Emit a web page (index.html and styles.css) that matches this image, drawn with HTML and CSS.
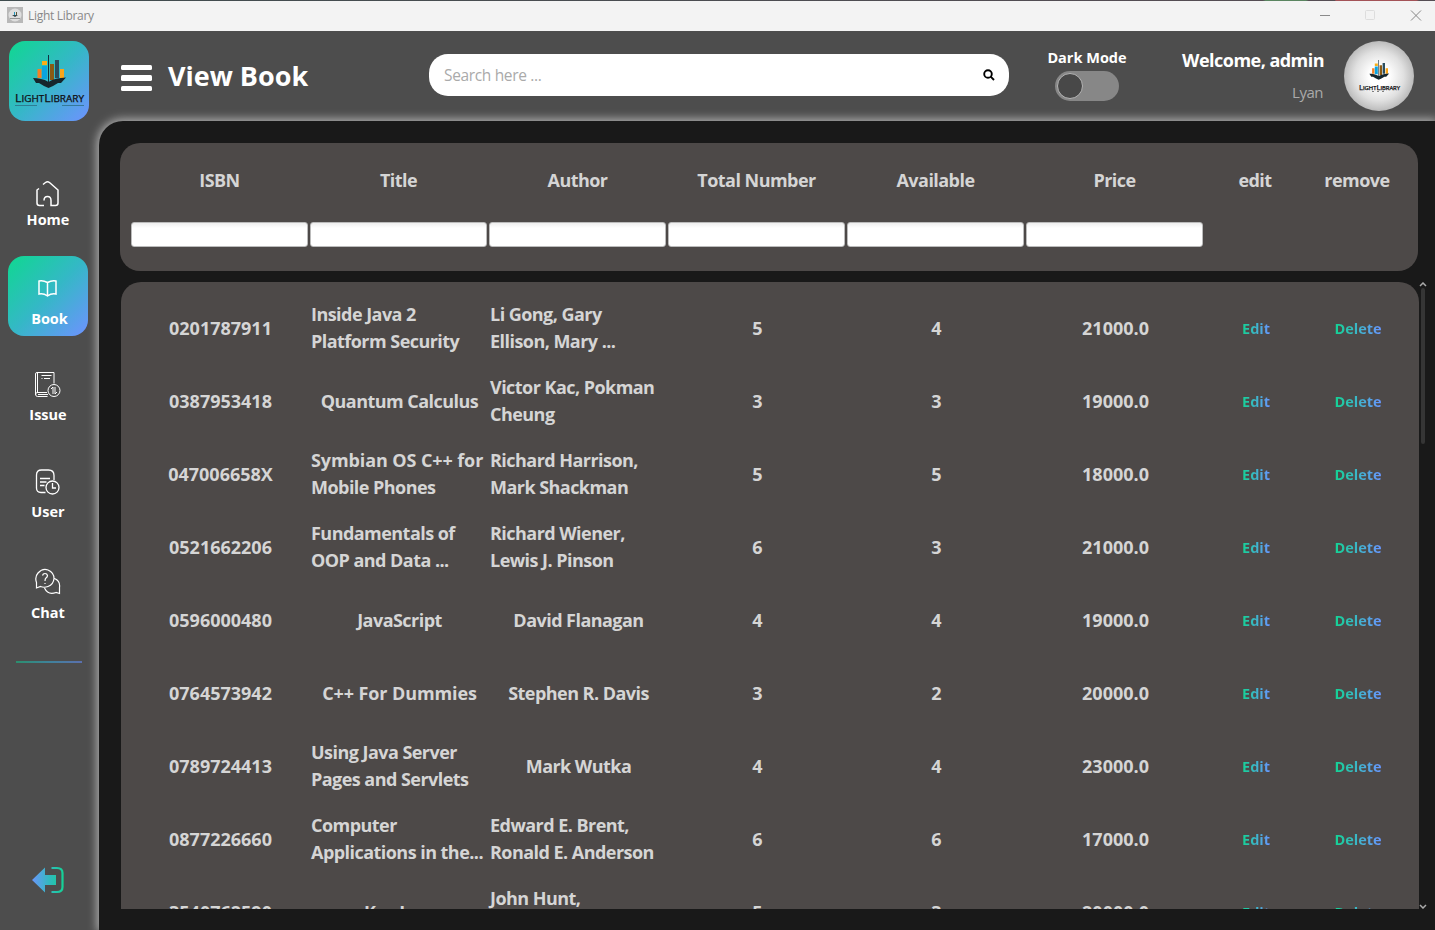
FILE: index.html
```html
<!DOCTYPE html>
<html lang="en">
<head>
<meta charset="utf-8">
<title>Light Library</title>
<link rel="stylesheet" href="styles.css">
</head>
<body>
<svg width="0" height="0" class="defs">
  <defs>
    <linearGradient id="exitg" gradientUnits="userSpaceOnUse" x1="0" x2="32" y1="0" y2="0"><stop offset="0" stop-color="#6a96fb"/><stop offset=".6" stop-color="#2dbdb8"/><stop offset="1" stop-color="#13d394"/></linearGradient>
    <symbol id="mark" viewBox="0 0 80 80">
      <path d="M28.500 28h4v9h-4z" fill="#f58025"/>
      <path d="M33 20h5v4h-5z" fill="#fbae17"/>
      <path d="M33 25h5v13h-5z" fill="#0aa5e0"/>
      <path d="M39 14h1v27h-1z" fill="#12303e"/>
      <path d="M41 23h4v16h-4z" fill="#8a5a14"/>
      <path d="M46 19h4v18h-4z" fill="#2a4d5e"/>
      <path d="M51 28h4v9h-4z" fill="#f9a51a"/>
      <path d="M24 37c5 0 11 1 15.500 4C44 38 50 37 57 36.500l-5 5.500h-3l-5 3-4.500 2-4.500-2-5-3h-3z" fill="#15262d"/>
    </symbol>
  </defs>
</svg>
<div class="titlebar">
  <svg class="favicon" viewBox="0 0 16 16"><rect width="16" height="16" fill="#b8b8b8"/><circle cx="8" cy="8" r="6.500" fill="#dedede"/><path d="M5 8h6L8 10z" fill="#34444a"/><path d="M7 5h1v3H7z" fill="#2496bd"/><path d="M9 5h1v3H9z" fill="#5b5537"/><path d="M3 11.500h10" stroke="#777" stroke-width=".7"/></svg>
  <span class="app-name">Light Library</span>
  <svg class="winbtns" viewBox="0 0 110 14" fill="none"><path d="M5 6.500h10" stroke="#8a8a8a"/><rect x="50.500" y="1.500" width="9" height="9" rx="1" stroke="#ddd"/><path d="M96 1.500l10 10M106 1.500l-10 10" stroke="#888"/></svg>
</div>
<div class="app">
  <aside class="sidebar">
    <div class="logo">
      <svg viewBox="0 0 80 80"><use href="#mark"/><text x="6" y="61" class="logo-text" textLength="69" lengthAdjust="spacingAndGlyphs"><tspan class="cap">L</tspan>IGHT<tspan class="cap">L</tspan>IBRARY</text><path d="M6 64.500h22M53 64.500h22" stroke="#2c6f85" stroke-width=".8"/></svg>
    </div>
    <nav class="nav">
      <a class="item home"><svg viewBox="0 0 26 28" fill="none" stroke="#fff" stroke-width="1.500"><path d="M4 8.500 2 10v13q0 2.500 2.500 2.500H9M9 20.500q0-4 3.500-4t3.500 4v5h4.500q2.500 0 2.500-2.500V10L14.500 2.500q-2-1.500-4 0L8 4.500"/></svg><span>Home</span></a>
      <a class="item book active"><svg viewBox="0 0 22 20" fill="none" stroke="#fff" stroke-width="1.500"><path d="M10.500 3.500Q6 1 2 2v13q4.500-1 8.500 2 4-3 8.500-2V2Q15 1 10.500 3.500zM10.500 3.500V17"/></svg><span>Book</span></a>
      <a class="item issue"><svg viewBox="0 0 26 28" fill="none" stroke="#fff"><path d="M12.500 25.500H2.500Q.5 25.500.5 23V3Q.5 1.500 2 1.500h17v11M2.500 2v20M12 21.500H2Q.5 22 .5 24M3 23.500h10M6.500 4.500h10M6.500 7.500h1M9 7.500h6"/><circle cx="19" cy="19.500" r="6"/><path d="M18 23v-7l-2 2M20 16v7l2-2"/></svg><span>Issue</span></a>
      <a class="item user"><svg viewBox="0 0 26 28" fill="none" stroke="#fff" stroke-width="1.300"><path d="M10.500 24.500H6Q1.500 24.500 1.500 20V7Q1.500 2 6.500 2h7Q19 2 19 7.500V12M5 10.500h10M5 14h6.500M5 17.500h4.500"/><circle cx="17.500" cy="19.500" r="6.500"/><path d="M17.500 15v5H21"/></svg><span>User</span></a>
      <a class="item chat"><svg viewBox="0 0 26 28" fill="none" stroke="#fff" stroke-width="1.200"><path d="M1.500 20v-5.500Q-.5 9 3 5q4.500-5 10-3 6 2.500 6 8.500-.5 6-6 8-4 1.500-7.500 0zM7.500 7.500Q8 5.500 10 5.500t2.500 2Q12.500 9 11 10q-1 .7-1 3M10 15v1M19.500 10.500q6 2.500 5 9v6L21 24.500q-8 3-11.500-4.500"/></svg><span>Chat</span></a>
    </nav>
    <div class="rule"></div>
    <svg class="exit" viewBox="0 0 33 28"><path d="M0 14 13 1.500V9h11v10H13v7.500z" fill="url(#exitg)"/><path d="M19.500 2H25q5.500 0 5.500 5v14q0 5-5.500 5h-5.500" fill="none" stroke="url(#exitg)" stroke-width="2.200"/></svg>
  </aside>
  <div class="main">
    <header class="header">
      <div class="burger"><i></i><i></i><i></i></div>
      <h1>View Book</h1>
      <div class="search"><span>Search here ...</span><svg viewBox="0 0 12 12" fill="none" stroke="#000" stroke-width="1.900"><circle cx="5" cy="5" r="3.800"/><path d="M7.700 7.700 11 11"/></svg></div>
      <div class="mode"><b>Dark Mode</b><div class="toggle"><i></i></div></div>
      <div class="who"><b>Welcome, admin</b><span>Lyan</span></div>
      <div class="avatar"><svg viewBox="0 0 70 70"><use href="#mark" x="11" y="10.500" width="48" height="48"/><text x="15" y="48.500" class="logo-text small" textLength="41" lengthAdjust="spacingAndGlyphs"><tspan class="cap">L</tspan>IGHT<tspan class="cap">L</tspan>IBRARY</text><path d="M28.500 50.500h1m4 0h1m4 0h1" stroke="#111"/></svg></div>
    </header>
    <main class="content">
      <section class="head-panel">
        <div class="row labels"><div class="t">ISBN</div><div class="t">Title</div><div class="t">Author</div><div class="t">Total Number</div><div class="t">Available</div><div class="t">Price</div><div class="t">edit</div><div class="t">remove</div></div>
        <div class="row filters"><input><input><input><input><input><input></div>
      </section>
      <div class="list-wrap">
        <section class="list">
          <div class="row"><div>0201787911</div><div class="t wrap">Inside Java 2<br>Platform Security</div><div class="t wrap">Li Gong, Gary<br>Ellison, Mary ...</div><div>5</div><div>4</div><div>21000.0</div><div><a>Edit</a></div><div><a>Delete</a></div></div>
          <div class="row"><div>0387953418</div><div class="t">Quantum Calculus</div><div class="t wrap">Victor Kac, Pokman<br>Cheung</div><div>3</div><div>3</div><div>19000.0</div><div><a>Edit</a></div><div><a>Delete</a></div></div>
          <div class="row"><div>047006658X</div><div class="t wrap"><span class="loose">Symbian OS C++ for</span><br>Mobile Phones</div><div class="t wrap">Richard Harrison,<br>Mark Shackman</div><div>5</div><div>5</div><div>18000.0</div><div><a>Edit</a></div><div><a>Delete</a></div></div>
          <div class="row"><div>0521662206</div><div class="t wrap">Fundamentals of<br>OOP and Data ...</div><div class="t wrap">Richard Wiener,<br>Lewis J. Pinson</div><div>6</div><div>3</div><div>21000.0</div><div><a>Edit</a></div><div><a>Delete</a></div></div>
          <div class="row"><div>0596000480</div><div class="t">JavaScript</div><div class="t">David Flanagan</div><div>4</div><div>4</div><div>19000.0</div><div><a>Edit</a></div><div><a>Delete</a></div></div>
          <div class="row"><div>0764573942</div><div class="loose">C++ For Dummies</div><div class="t">Stephen R. Davis</div><div>3</div><div>2</div><div>20000.0</div><div><a>Edit</a></div><div><a>Delete</a></div></div>
          <div class="row"><div>0789724413</div><div class="t wrap">Using Java Server<br>Pages and Servlets</div><div class="t">Mark Wutka</div><div>4</div><div>4</div><div>23000.0</div><div><a>Edit</a></div><div><a>Delete</a></div></div>
          <div class="row"><div>0877226660</div><div class="t wrap">Computer<br>Applications in the...</div><div class="t wrap">Edward E. Brent,<br>Ronald E. Anderson</div><div>6</div><div>6</div><div>17000.0</div><div><a>Edit</a></div><div><a>Delete</a></div></div>
          <div class="row"><div>3540762590</div><div class="t">Key Java</div><div class="t wrap">John Hunt,<br>Alex McManus</div><div>5</div><div>3</div><div>20000.0</div><div><a>Edit</a></div><div><a>Delete</a></div></div>
        </section>
        <div class="scroll"><svg viewBox="0 0 8 5" fill="none" stroke="#aaa" stroke-width="1.500"><path d="M1 4l3-3 3 3"/></svg><i></i><svg class="down" viewBox="0 0 8 5" fill="none" stroke="#aaa" stroke-width="1.500"><path d="M1 1l3 3 3-3"/></svg></div>
      </div>
    </main>
  </div>
</div>
</body>
</html>
```
FILE: styles.css
```css
* { box-sizing: border-box; }
body { margin: 0; width: 1435px; height: 930px; overflow: hidden; display: flex; flex-direction: column; font-family: "Open Sans", "Noto Sans", sans-serif; background: #4d4d4d; }
svg { display: block; flex: none; }
.defs { position: absolute; }
.titlebar { height: 31px; flex: none; background: linear-gradient(90deg, #3f4c4e, #554d53 88%, #5a8560 88.200% 91%, #554d53 91.200% 93%, #a35257 93.100% 98.700%, #554d53 98.900%) 0 0 / 100% 1px no-repeat #f3f3f3; display: flex; align-items: center; padding: 0 10px 0 7px; }
.favicon { width: 16px; height: 16px; margin-top: -1px; }
.app-name { font-size: 12px; color: #888; margin-left: 5px; line-height: 16px; padding-top: 1px; flex: 1; letter-spacing: -.3px; }
.winbtns { width: 110px; height: 14px; }
.app { flex: 1; display: flex; min-height: 0; }
.sidebar { width: 99px; flex: none; padding: 10px 0 0 8px; display: flex; flex-direction: column; }
.logo { width: 80px; height: 80px; margin-left: 1px; border-radius: 16px; background: linear-gradient(135deg, #0fd890, #34b8c6 50%, #6e92ff); }
.logo-text { font: 8.500px "Open Sans", sans-serif; fill: #101014; stroke: #101014; stroke-width: .25px; }
.logo-text .cap { font-size: 10.500px; }
.logo-text.small { font-size: 5px; }
.logo-text.small .cap { font-size: 6.500px; }
.nav { display: flex; flex-direction: column; margin-top: 37px; }
.item { height: 80px; width: 80px; display: flex; flex-direction: column; align-items: center; border-radius: 16px; color: #fff; font-weight: 700; font-size: 14.5px; line-height: 20px; }
.item svg { width: 26px; height: 28px; }
.home { padding-top: 22px; }
.home span { margin-top: 2px; }
.book { margin-top: 18px; background: linear-gradient(135deg, #0fd890, #34b8c6 50%, #6e92ff); padding-top: 23px; }
.book svg { width: 22px; height: 20px; }
.book span { margin: 10px 0 0 3px; }
.issue { margin-top: 18px; padding-top: 17px; }
.issue span { margin-top: 6px; }
.user { margin-top: 18px; padding-top: 16px; }
.user span { margin-top: 6px; }
.chat { margin-top: 18px; padding-top: 18px; }
.chat span { margin-top: 7px; }
.rule { width: 66px; height: 2px; margin: 31px 0 0 8px; background: linear-gradient(90deg, #2b8f6e, #3f829a 50%, #5b70ae); }
.exit { width: 33px; height: 28px; margin: 203px 0 0 24px; }
.main { flex: 1; min-width: 0; display: flex; flex-direction: column; }
.header { height: 90px; flex: none; display: flex; padding-left: 22px; color: #fff; }
.burger { width: 31px; display: flex; flex-direction: column; gap: 5px; padding-top: 34px; }
.burger i { height: 5.300px; border-radius: 1.500px; background: #fff; }
h1 { margin: 25px 0 0 16px; width: 261px; font-size: 27px; line-height: 40px; font-weight: 700; }
.search { width: 580px; height: 42px; margin-top: 23px; border-radius: 19px; background: #fff; color: #aaa; display: flex; align-items: center; justify-content: space-between; padding: 0 14px 0 15px; font-size: 15.5px; letter-spacing: -.35px; }
.search svg { width: 12px; height: 12px; }
.mode { margin: 17px 0 0 38px; width: 80px; display: flex; flex-direction: column; align-items: center; font-size: 14.5px; line-height: 20px; white-space: nowrap; }
.toggle { width: 64px; height: 30px; margin-top: 3px; border-radius: 15px; background: #878787; padding: 2px; }
.toggle i { display: block; width: 26px; height: 26px; border-radius: 50%; background: #484848; border: 1px solid #b5b5b5; }
.who { width: 197px; display: flex; flex-direction: column; align-items: flex-end; padding-top: 17px; font-size: 18px; line-height: 24px; }
.who b { letter-spacing: -.53px; }
.who span { font-size: 15px; color: #aaa; margin: 8px 1px 0 0; letter-spacing: -.5px; }
.avatar { width: 70px; height: 70px; margin: 10px 0 0 20px; border-radius: 50%; background: radial-gradient(circle, #fff 0 20%, #e0e0e0 50%, #b9b9b9 72%); }
.content { flex: 1; min-height: 0; background: #191919; border-radius: 24px 0 0 0; box-shadow: 0 0 10px 2px #b0b0b0; padding: 22px 0 0 21px; }
.head-panel { width: 1298px; height: 128px; border-radius: 20px; background: #4d4948; padding: 21px 11px 0; }
.row { display: grid; grid-template-columns: repeat(6, 177px) 100px 100px; column-gap: 2px; height: 73px; align-items: center; justify-items: center; color: #d5d5d5; font-size: 18px; line-height: 27px; font-weight: 700; white-space: nowrap; }
.row.labels { height: 32px; }
.row.filters { height: 26px; margin-top: 25px; }
.filters input { width: 177px; height: 25px; border: 1px solid #bbb; border-radius: 3px; background: linear-gradient(#eee, #fff 5px); }
.t { letter-spacing: -.54px; }
.loose { letter-spacing: -.1px; }
.row .wrap { justify-self: start; padding-bottom: 2px; }
.row a { display: block; padding-bottom: 1px; letter-spacing: -.05px; font-size: 14.5px; background: linear-gradient(90deg, #13d394, #6896ff); -webkit-background-clip: text; background-clip: text; color: transparent; }
.list-wrap { display: flex; margin: 11px 0 0 1px; height: 627px; }
.list { width: 1298px; overflow: hidden; border-radius: 20px 20px 0 0; background: #4d4948; padding: 10px 11px 0; }
.scroll { width: 8px; display: flex; flex-direction: column; align-items: center; }
.scroll svg { width: 8px; height: 5px; }
.scroll i { width: 4px; height: 156px; border-radius: 2px; background: #353535; margin-top: 1px; }
.scroll .down { margin-top: auto; }
```
